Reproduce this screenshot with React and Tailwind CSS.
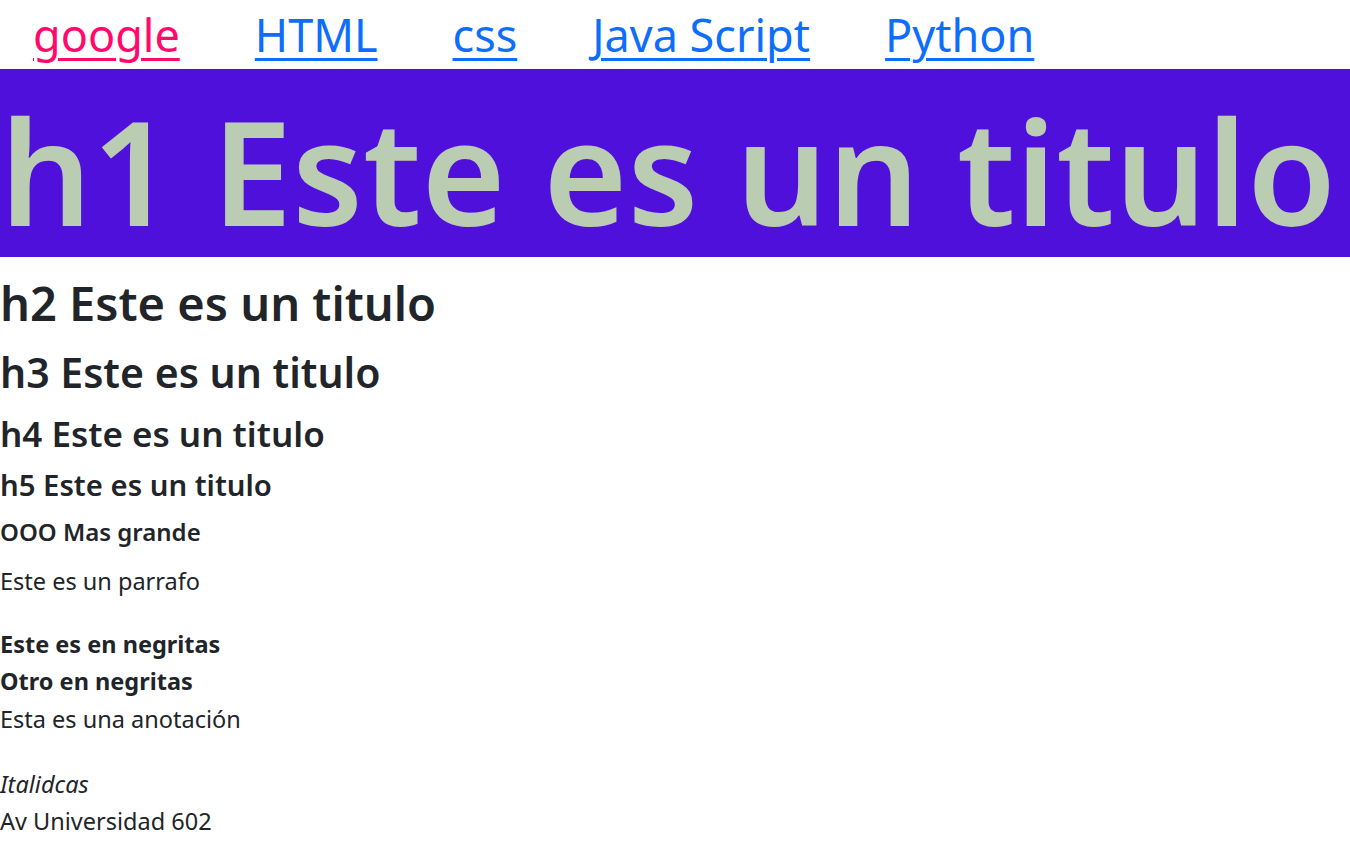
import React from "react";

const LINKS = [
  { label: "google", color: "text-[#ff0a6c]" },
  { label: "HTML", color: "text-[#0d6efd]" },
  { label: "css", color: "text-[#0d6efd]" },
  { label: "Java Script", color: "text-[#0d6efd]" },
  { label: "Python", color: "text-[#0d6efd]" },
];

export default function App() {
  return (
    <div className="min-h-screen w-full bg-white text-[#212529] font-['Noto_Sans','Open_Sans',sans-serif]">
      {/* nav */}
      <nav className="flex h-[69px] items-start gap-[75px] pl-[33px]">
        {LINKS.map((l) => (
          <a
            key={l.label}
            href="#"
            className={`${l.color} text-[45px] leading-[69px] underline decoration-[3px] underline-offset-[6px]`}
          >
            {l.label}
          </a>
        ))}
      </nav>

      {/* big title */}
      <div className="h-[188px] bg-[#5010dc] pt-[15px]">
        <h1 className="text-[144px] leading-[173px] font-semibold text-[#bacdb2] whitespace-nowrap">
          h1 Este es un titulo
        </h1>
      </div>

      <h2 className="mt-[17px] text-[47px] leading-[58px] font-semibold">h2 Este es un titulo</h2>
      <h3 className="mt-[15px] text-[41px] leading-[50px] font-semibold">h3 Este es un titulo</h3>
      <h4 className="mt-[15px] text-[35px] leading-[44px] font-semibold">h4 Este es un titulo</h4>
      <h5 className="mt-[11px] text-[29.3px] leading-[36px] font-semibold">h5 Este es un titulo</h5>
      <h6 className="mt-[15px] text-[24px] leading-[28px] font-semibold">OOO Mas grande</h6>

      <p className="mt-[18px] text-[23.5px] leading-[34px]">Este es un parrafo</p>

      <div className="mt-[28px] text-[23.5px] leading-[37px]">
        <div className="font-bold">Este es en negritas</div>
        <div className="h-[38px] font-bold">Otro en negritas</div>
        <div>Esta es una anotación</div>
      </div>

      <address className="mt-[27px] text-[23.5px] not-italic">
        <div className="italic leading-[38px]">Italidcas</div>
        <div className="leading-[37px]">Av Universidad 602</div>
      </address>
    </div>
  );
}
